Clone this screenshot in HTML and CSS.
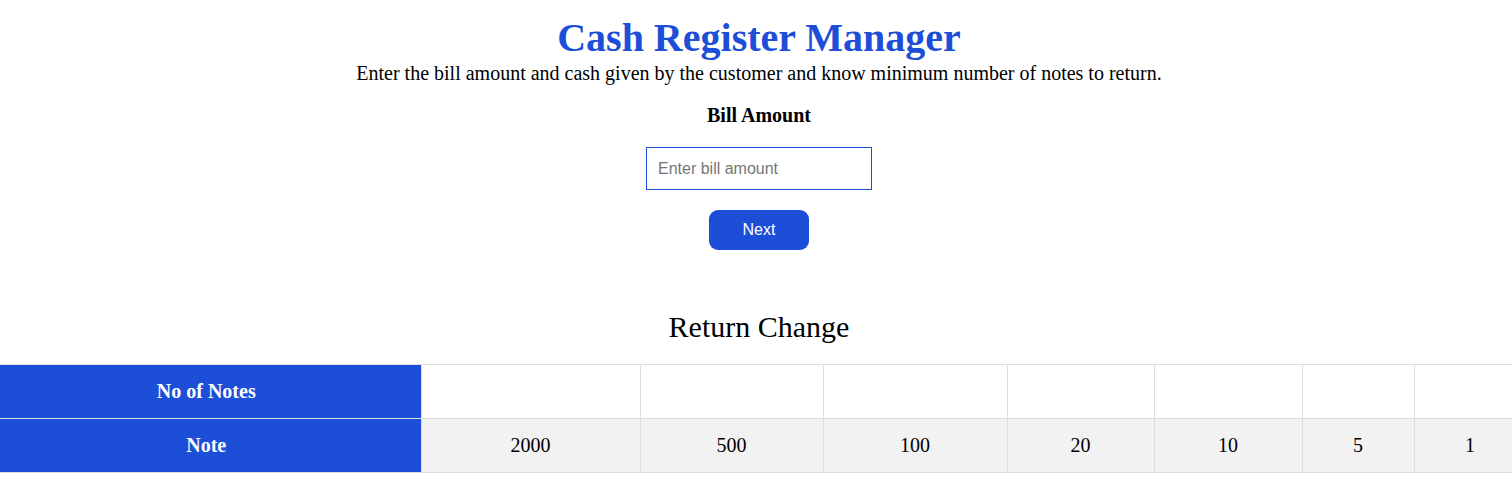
FILE: index.html
```html
<!DOCTYPE html>
<html lang="en">
<head>
<meta charset="utf-8">
<title>Cash Register Manager</title>
<link rel="stylesheet" href="styles.css">
</head>
<body>
<div class="page">
  <header class="intro">
    <h1 class="title">Cash Register Manager</h1>
    <p class="subtitle">Enter the bill amount and cash given by the customer and know minimum number of notes to return.</p>
  </header>
  <section class="form">
    <label class="label" for="bill">Bill Amount</label>
    <input class="input" id="bill" type="number" placeholder="Enter bill amount">
    <button class="btn" type="button">Next</button>
  </section>
  <h2 class="section-title">Return Change</h2>
  <table class="change">
    <colgroup>
      <col class="c0"><col class="c1"><col class="c2"><col class="c3"><col class="c4"><col class="c5"><col class="c6"><col class="c7">
    </colgroup>
    <tr>
      <th class="head">No of Notes</th>
      <td class="cell"></td><td class="cell"></td><td class="cell"></td><td class="cell"></td><td class="cell"></td><td class="cell"></td><td class="cell"></td>
    </tr>
    <tr class="alt">
      <th class="head">Note</th>
      <td class="cell">2000</td><td class="cell">500</td><td class="cell">100</td><td class="cell">20</td><td class="cell">10</td><td class="cell">5</td><td class="cell">1</td>
    </tr>
  </table>
</div>
</body>
</html>
```

FILE: styles.css
```css
html, body {
  margin: 0;
  padding: 0;
  background: #ffffff;
  overflow: hidden;
}
body {
  font-family: "Liberation Serif", "Times New Roman", serif;
  color: #000;
}
.page {
  width: 1526px;
}
.intro {
  width: 1518px;
  text-align: center;
  padding-top: 15px;
}
.title {
  margin: 0;
  font-size: 40px;
  line-height: 46px;
  font-weight: bold;
  color: #1d4ed8;
}
.subtitle {
  margin: 0;
  font-size: 20px;
  line-height: 24px;
}
.form {
  width: 1518px;
  display: flex;
  flex-direction: column;
  align-items: center;
  padding-top: 19px;
}
.label {
  font-weight: bold;
  font-size: 20px;
  line-height: 23px;
}
.input {
  margin-top: 20px;
  width: 226px;
  height: 43px;
  box-sizing: border-box;
  border: 1px solid #1d4ed8;
  padding: 0 11px;
  font-family: "Liberation Sans", Arial, sans-serif;
  font-size: 16px;
  outline: none;
}
.input::placeholder {
  color: #767676;
}
.btn {
  margin-top: 20px;
  width: 100px;
  height: 40px;
  border: none;
  border-radius: 9px;
  background: #1d4ed8;
  color: #fff;
  font-family: "Liberation Sans", Arial, sans-serif;
  font-size: 16px;
}
.section-title {
  width: 1518px;
  margin: 60px 0 0;
  text-align: center;
  font-weight: normal;
  font-size: 30px;
  line-height: 34px;
}
.change {
  margin-top: 20px;
  width: 1526px;
  table-layout: fixed;
  border-collapse: collapse;
  font-size: 20px;
}
.c0 { width: 421px; }
.c1 { width: 219px; }
.c2 { width: 183px; }
.c3 { width: 184px; }
.c4 { width: 147px; }
.c5 { width: 148px; }
.c6 { width: 112px; }
.c7 { width: 112px; }
.head, .cell {
  border: 1px solid #dddddd;
  height: 53px;
  padding: 0;
  text-align: center;
  vertical-align: middle;
}
.head {
  border-left: none;
  padding-right: 8px;
  background: #1d4ed8;
  color: #fff;
  font-weight: bold;
}
.alt .cell {
  background: #f2f2f2;
}
```
